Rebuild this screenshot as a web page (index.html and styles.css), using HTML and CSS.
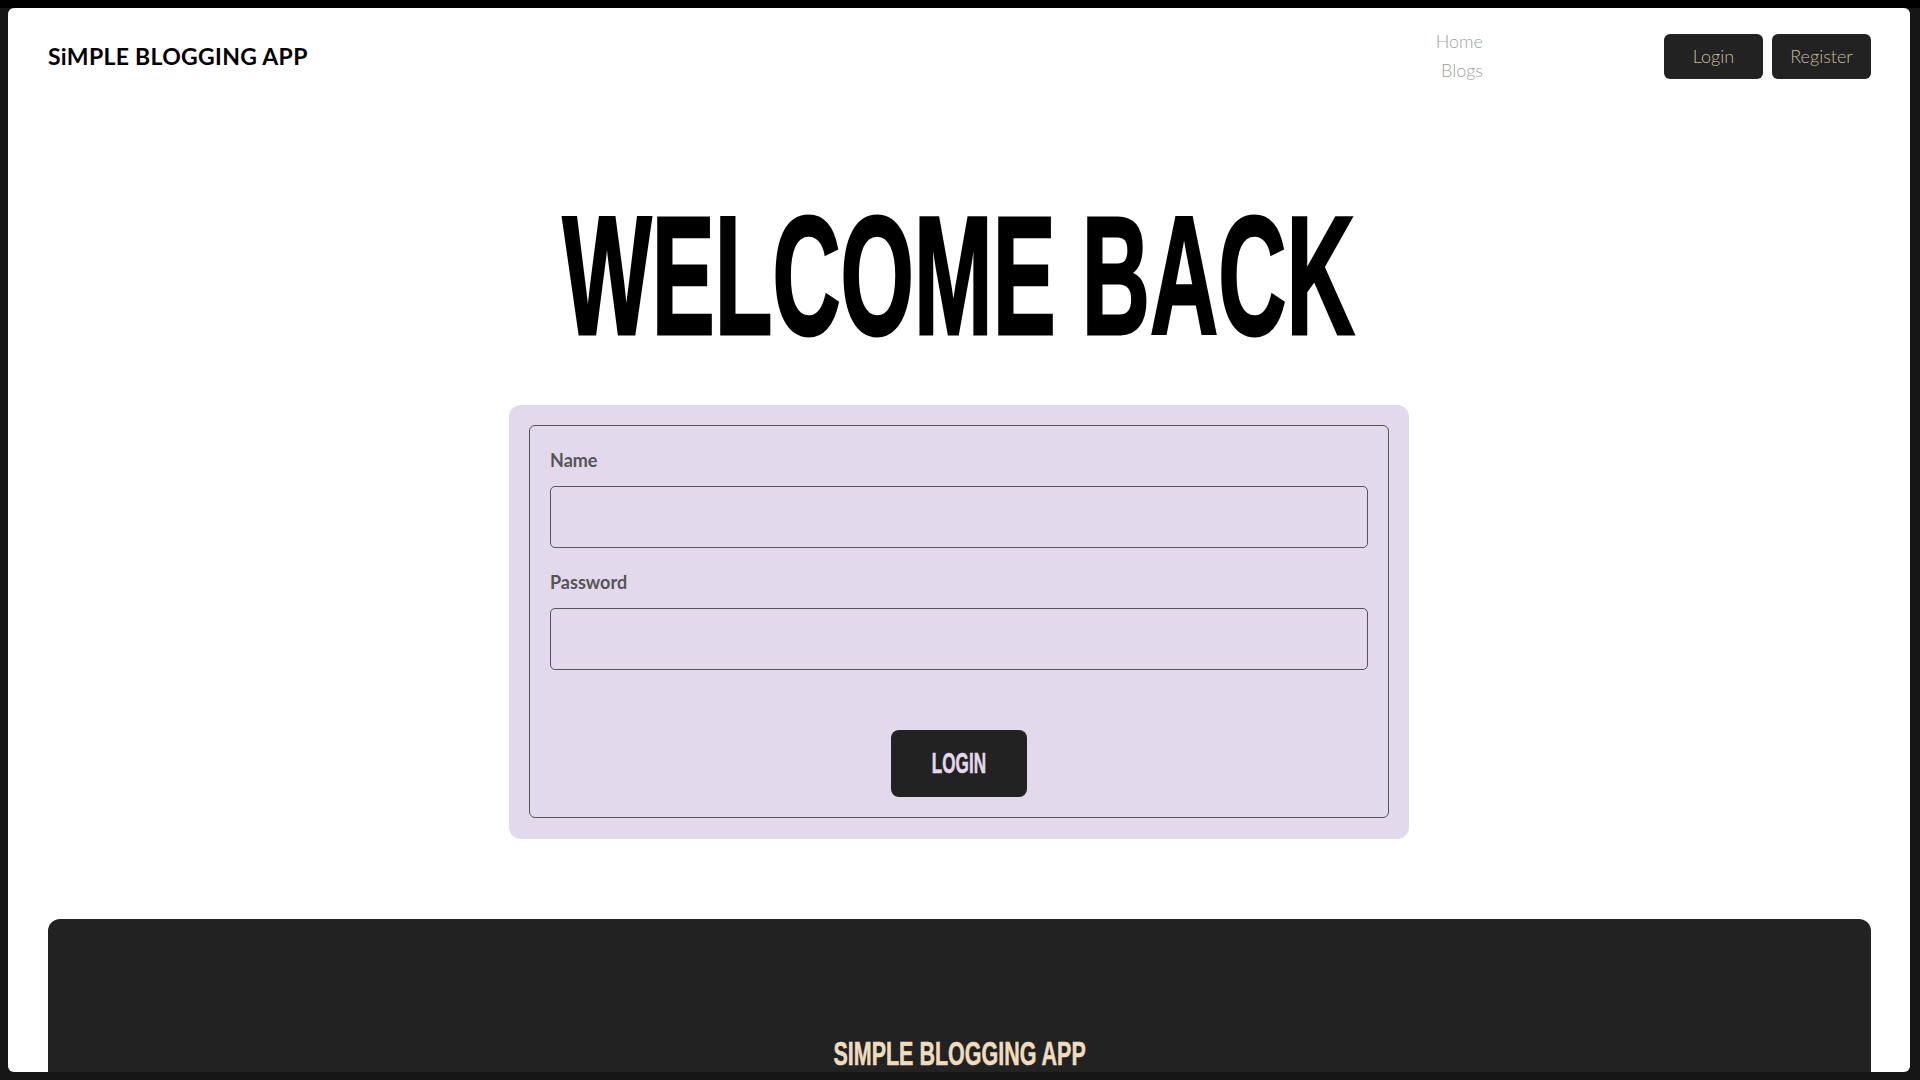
FILE: index.html
```html
<!DOCTYPE html>
<html lang="en">
<head>
<meta charset="utf-8">
<title>Simple Blogging App - Login</title>
<link rel="stylesheet" href="styles.css">
</head>
<body>
<div class="app">
  <header class="header">
    <div class="logo">SiMPLE BLOGGING APP</div>
    <ul class="nav">
      <li><a href="#">Home</a></li>
      <li><a href="#">Blogs</a></li>
    </ul>
    <div class="auth">
      <button class="btn-top">Login</button>
      <button class="btn-top">Register</button>
    </div>
  </header>
  <main class="main">
    <h1 class="title"><span class="squeeze">WELCOME BACK</span></h1>
    <div class="card">
      <form class="form">
        <label class="label" for="name">Name</label>
        <input class="input" id="name" type="text">
        <label class="label label-2" for="password">Password</label>
        <input class="input" id="password" type="password">
        <div class="actions">
          <button type="button" class="btn-login"><span class="squeeze-s">LOGIN</span></button>
        </div>
      </form>
    </div>
  </main>
  <footer class="footer">
    <div class="footer-title"><span class="squeeze-f">SIMPLE BLOGGING APP</span></div>
  </footer>
</div>
</body>
</html>
```
FILE: styles.css
```css
* { box-sizing: border-box; }
html, body { margin: 0; }
body {
  background: #161616;
  border-top: 8px solid #000;
  padding: 0 10px 8px 8px;
  height: 1080px;
  overflow: hidden;
  font-family: Lato, "Open Sans", sans-serif;
}
.app {
  background: #fff;
  height: 1064px;
  border-radius: 6px;
  overflow: hidden;
}
.header {
  display: flex;
  align-items: center;
  padding: 20px 39px 0 40px;
  height: 76px;
}
.logo {
  font-family: Lato, sans-serif;
  font-weight: 700;
  font-size: 23px;
  color: #000;
  letter-spacing: 0.3px;
}
.nav {
  list-style: none;
  margin: 0 181px 0 auto;
  padding: 0;
  text-align: right;
}
.nav li { line-height: 28px; }
.nav a {
  color: #a0a0a0;
  text-decoration: none;
  font-weight: 300;
  font-size: 18px;
}
.auth { display: flex; gap: 9px; }
.btn-top {
  width: 99px;
  height: 45px;
  border: 0;
  border-radius: 6px;
  background: #222;
  color: #cbbd9f;
  font-family: Lato, sans-serif;
  font-weight: 300;
  font-size: 18px;
  padding: 0;
}
.main { display: flex; flex-direction: column; align-items: center; }
.title {
  margin: 108px 0 0;
  height: 168px;
  line-height: 168px;
  font-size: 168px;
  font-family: "Liberation Sans", sans-serif;
  font-weight: 700;
  color: #000;
  text-align: center;
  width: 100%;
  -webkit-text-stroke: 3px #000;
}
.squeeze { display: inline-block; transform: scaleX(0.562); transform-origin: center; }
.card {
  margin-top: 45px;
  width: 900px;
  padding: 20px 20px 21px 20px;
  background: #e2d9ec;
  border-radius: 12px;
}
.form {
  border: 1px solid #555;
  border-radius: 6px;
  padding: 24px 20px 20px;
  display: flex;
  flex-direction: column;
}
.label {
  font-weight: 700;
  font-size: 18px;
  color: #555;
  line-height: 20px;
}
.label-2 { margin-top: 24px; }
.input {
  margin-top: 16px;
  height: 62px;
  border: 1px solid #555;
  border-radius: 5px;
  background: transparent;
}
.actions { display: flex; justify-content: center; margin-top: 60px; }
.btn-login {
  width: 136px;
  height: 67px;
  border: 0;
  border-radius: 8px;
  background: #222;
  color: #e2d9ec;
  font-family: "Liberation Sans", sans-serif;
  font-weight: 700;
  font-size: 29px;
  padding: 0;
  -webkit-text-stroke: 0.6px #e2d9ec;
}
.squeeze-s { display: inline-block; transform: scaleX(0.59); }
.footer {
  margin: 80px 39px 0 40px;
  height: 400px;
  background: #222;
  border-radius: 12px;
  padding-top: 119px;
  text-align: center;
}
.footer-title {
  font-family: "Liberation Sans", sans-serif;
  font-weight: 700;
  font-size: 34px;
  line-height: 30px;
  color: #eedcbf;
  -webkit-text-stroke: 0.6px #eedcbf;
}
.squeeze-f { display: inline-block; transform: scaleX(0.632); }
```
